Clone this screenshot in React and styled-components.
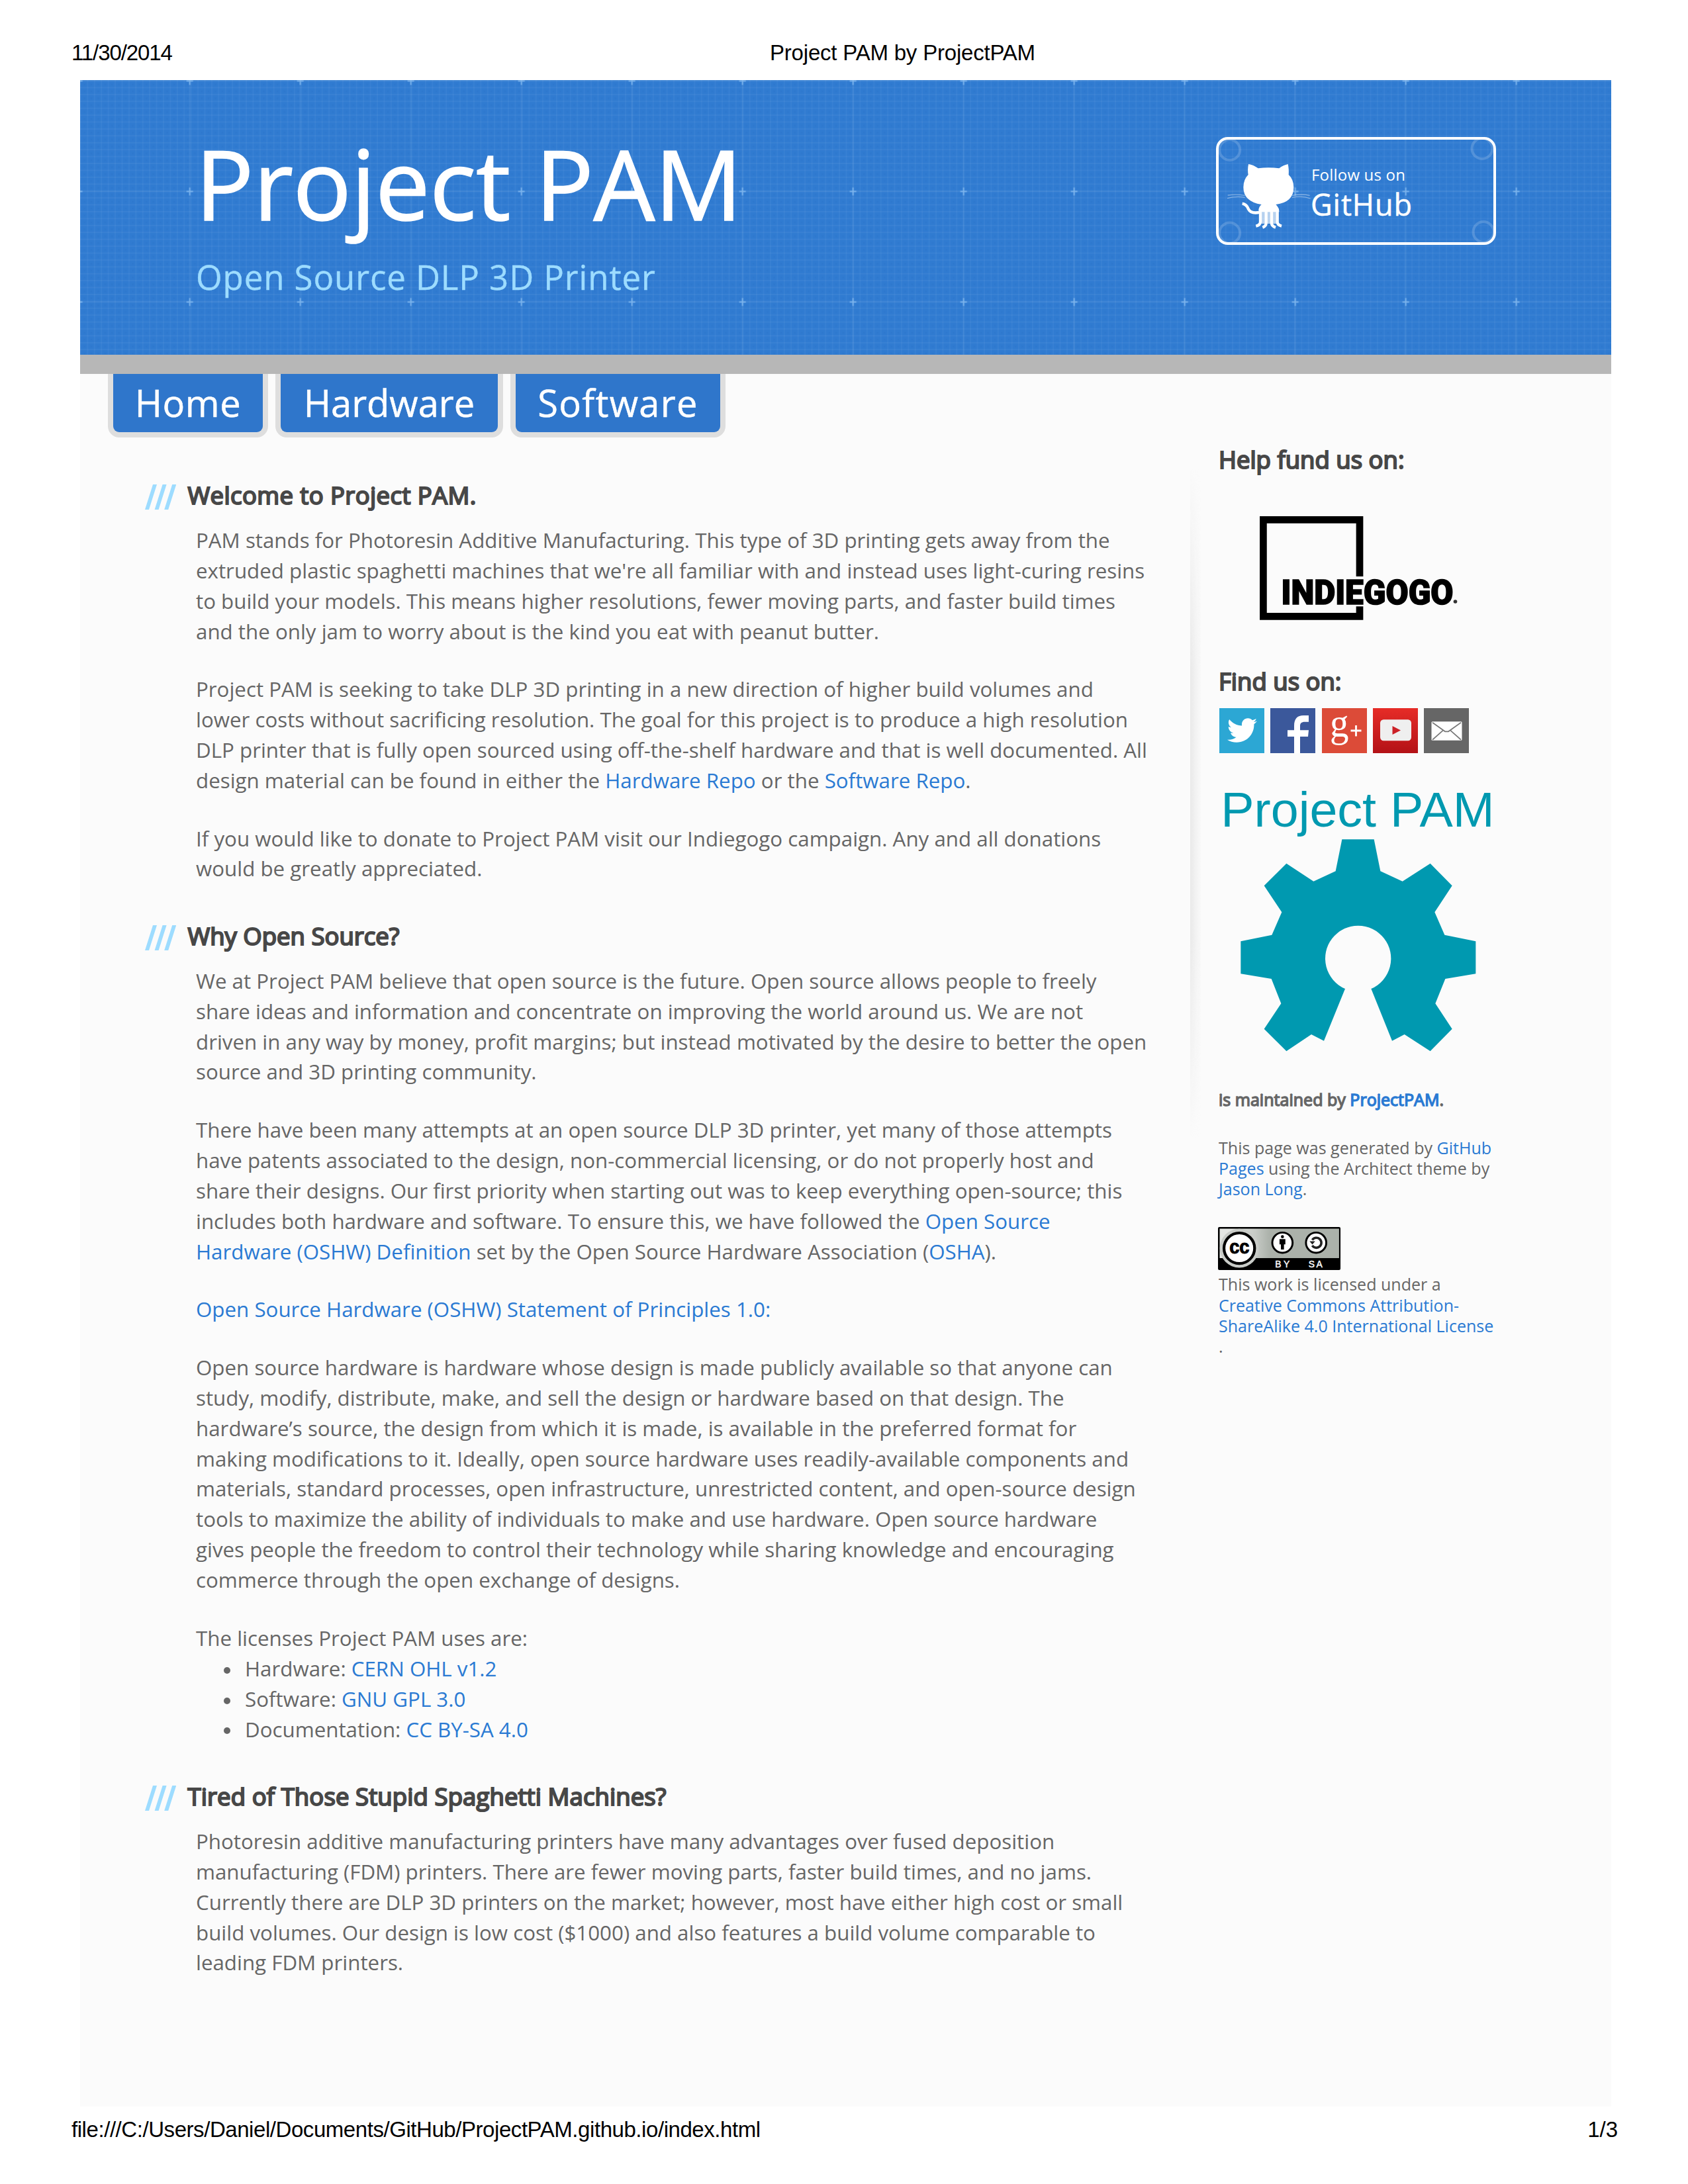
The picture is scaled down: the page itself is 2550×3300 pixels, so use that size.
import React from "react";
import styled, { createGlobalStyle } from "styled-components";
import { FaTwitter } from "react-icons/fa";

const sans = `"Open Sans", "Noto Sans", sans-serif`;
const arial = `"Liberation Sans", Arial, sans-serif`;
const blue = "#2a7ad3";

const GlobalStyle = createGlobalStyle`
  body { margin: 0; background: #fff; }
  * { box-sizing: border-box; }
`;

const Sheet = styled.div`
  width: 2550px;
  height: 3300px;
  overflow: hidden;
  background: #fff;
  display: flex;
  flex-direction: column;
  font-family: ${sans};
  color: #666;
`;

const PrintLine = styled.div`
  display: grid;
  grid-template-columns: 1055px auto 1fr;
  width: 2336px;
  margin-left: 108px;
  padding-top: ${(p) => p.$top}px;
  height: ${(p) => p.$height}px;
  font: 33px/38px ${arial};
  color: #000;
  white-space: nowrap;
`;

const PrintText = styled.span`
  letter-spacing: ${(p) => p.$track || 0}px;
  text-align: ${(p) => p.$align || "left"};
`;

const Page = styled.div`
  width: 2313px;
  height: 3062px;
  margin-left: 121px;
  background: #fbfbfb;
`;

const Header = styled.header`
  position: relative;
  height: 415px;
  padding: 75px 174px 0 174px;
  background: #307bd1;
  display: flex;
  justify-content: space-between;
  align-items: flex-start;
`;

const Texture = styled.svg`
  position: absolute;
  inset: 0;
  width: 100%;
  height: 100%;
`;

const Brand = styled.div`
  position: relative;
`;

const Title = styled.h1`
  margin: 0;
  font-size: 147px;
  line-height: 160px;
  font-weight: 400;
  letter-spacing: -0.5px;
  color: #fff;
  -webkit-text-stroke: 1.6px #fff;
`;

const Tagline = styled.h2`
  margin: 32px 0 0 1px;
  font-size: 51px;
  line-height: 60px;
  font-weight: 400;
  letter-spacing: 0.9px;
  color: #9ddcff;
  -webkit-text-stroke: 0.4px #9ddcff;
`;

const FollowButton = styled.a`
  position: relative;
  width: 423px;
  height: 163px;
  margin-top: 11px;
  border: 4px solid #fff;
  border-radius: 18px;
  display: flex;
  align-items: flex-start;
  color: #fff;
`;

const CornerRings = styled.svg`
  position: absolute;
  left: -4px;
  top: -4px;
`;

const Octocat = styled.svg`
  margin: 33px 0 0 11px;
  flex: none;
`;

const FollowText = styled.div`
  display: flex;
  flex-direction: column;
  margin: 34.5px 0 0 -1px;
`;

const FollowSmall = styled.span`
  font-size: 24px;
  line-height: 36px;
  letter-spacing: 0.2px;
`;

const FollowLarge = styled.span`
  font-size: 45px;
  line-height: 53px;
  letter-spacing: 0.9px;
  margin-left: -1px;
  -webkit-text-stroke: 0.5px #fff;
`;

const Divider = styled.div`
  position: relative;
  z-index: 1;
  height: 29px;
  background: #b7b7b7;
`;

const Nav = styled.nav`
  display: flex;
  gap: 27px;
  padding-left: 50px;
  height: 96px;
`;

const Tab = styled.a`
  width: ${(p) => p.$width}px;
  height: 88px;
  line-height: 87px;
  font-size: 56px;
  letter-spacing: ${(p) => p.$track || 0}px;
  text-align: center;
  color: #fff;
  background: #2f76cb;
  border-radius: 0 0 9px 9px;
  box-shadow: 0 0 0 8px #dedede;
  -webkit-text-stroke: 0.5px #fff;
`;

const Columns = styled.div`
  display: flex;
  align-items: flex-start;
`;

const Main = styled.main`
  width: 1677px;
  padding: 64px 0 0 98px;
`;

const Section = styled.section`
  margin-bottom: 54.5px;
`;

const HeadingRow = styled.div`
  display: flex;
  align-items: flex-start;
  margin-bottom: 22.9px;
`;

const Slashes = styled.svg`
  width: 47px;
  height: 38px;
  margin: 7px 17.5px 0 0;
`;

const Heading = styled.h3`
  margin: 0;
  font-size: 36.5px;
  line-height: 46px;
  font-weight: 400;
  letter-spacing: ${(p) => p.$track || 0}px;
  color: #474747;
  -webkit-text-stroke: 2.1px #474747;
  white-space: nowrap;
`;

const Copy = styled.div`
  width: 1440px;
  margin-left: 77px;
  font-size: 31.3px;
  line-height: 45.9px;
`;

const P = styled.p`
  margin: 0 0 41.7px;
  &:last-child { margin-bottom: 0; }
`;

const Lead = styled.p`
  margin: 0;
`;

const List = styled.ul`
  margin: 0;
  padding-left: 75px;
  list-style: none;
`;

const Item = styled.li`
  display: flex;
  align-items: center;
  white-space: pre;
  &::before {
    content: "";
    width: 10px;
    height: 10px;
    margin: 4px 22px 0 -33px;
    border-radius: 50%;
    background: #666;
  }
`;

const Link = styled.a`
  color: ${blue};
`;

const Side = styled.aside`
  position: relative;
  width: 470px;
  padding: 9.6px 0 0 43px;
  display: flex;
  flex-direction: column;
  align-items: flex-start;
  font-size: 25.05px;
  line-height: 31.3px;
`;

const SideShade = styled.div`
  position: absolute;
  left: 0;
  top: 46px;
  width: 17px;
  height: 1013px;
  background: linear-gradient(to right, #e9e9e9, rgba(251, 251, 251, 0));
  mask-image: linear-gradient(transparent, #000 30%, #000 70%, transparent);
`;

const IndiegogoLogo = styled.svg`
  width: 310px;
  height: 157px;
  margin: 63.6px 0 69.2px 62px;
`;

const Social = styled.div`
  display: flex;
  gap: 9.25px;
  margin: 17.6px 0 55.3px 1px;
`;

const Tile = styled.span`
  width: 68px;
  height: 68px;
  background: ${(p) => p.$bg};
  display: flex;
  align-items: center;
  justify-content: center;
  color: #fff;
`;

const Glyph = styled.svg`
  width: 68px;
  height: 68px;
`;

const GearLogo = styled.svg`
  width: 420px;
  height: 400px;
  margin-left: 0.3px;
`;

const Maintained = styled.p`
  margin: 53px 0 41px;
  -webkit-text-stroke: 1.4px;
  white-space: nowrap;
`;

const Fine = styled.p`
  margin: 0;
  width: 416px;
`;

const Badge = styled.svg`
  width: 185px;
  height: 65px;
  margin: 42px 0 6px -1px;
`;

function BlueprintTexture() {
  return (
    <Texture>
      <defs>
        <pattern id="fine" width="10.42" height="10.42" patternUnits="userSpaceOnUse">
          <rect x="0" y="0" width="1.8" height="10.42" fill="#fff" opacity=".035" />
          <rect x="0" y="0" width="10.42" height="1.8" fill="#fff" opacity=".045" />
          <rect x="5" y="5" width="3" height="3" fill="#1d5fb8" opacity=".1" />
        </pattern>
        <pattern id="cross" x="82.2" y="-82.2" width="167" height="167" patternUnits="userSpaceOnUse">
          <path d="M83.5 0V167M0 83.5H167" stroke="#fff" strokeWidth="2" opacity=".06" />
          <path d="M83.5 77.5V89.5M78.5 83.5H88.5" stroke="#9fd0fb" strokeWidth="2" opacity=".6" />
        </pattern>
      </defs>
      <rect width="100%" height="100%" fill="url(#fine)" />
      <rect width="100%" height="100%" fill="url(#cross)" />
    </Texture>
  );
}

function OctocatMark() {
  return (
    <Octocat width="130" height="104" viewBox="214 186 390 312" fill="none">
      <g stroke="#fff" strokeWidth="4" opacity=".4">
        <path d="M222 339Q260 333 300 340M220 353Q260 342 300 349M514 340Q560 332 594 340M514 349Q560 340 597 354" />
      </g>
      <path
        fill="#fff"
        d="M316 198Q338 201 360 217Q407 211 455 217Q474 202 495 198Q500 222 498 246Q521 268 521 303Q521 371 440 381Q456 396 455 415H378L362 408Q362 392 375 381Q293 368 293 303Q293 268 315 246Q311 222 316 198Z"
      />
      <path fill="#fff" opacity=".65" d="M375 405H448V468H375Z" />
      <path
        stroke="#fff"
        strokeWidth="13"
        d="M370 400V460Q370 474 350 479M396 400V466Q396 479 380 485M421 400V466Q421 479 439 485M447 400V460Q447 474 466 479"
      />
      <path stroke="#fff" strokeWidth="13" d="M288 377Q308 380 316 402Q328 425 368 416" />
    </Octocat>
  );
}

function SectionHeading({ children, track }) {
  return (
    <HeadingRow>
      <Slashes viewBox="0 0 47 38">
        <path fill="#9ddcff" d="M0 38L12 0H18L6 38ZM14.6 38L26.6 0H32.6L20.6 38ZM29.2 38L41.2 0H47.2L35.2 38Z" />
      </Slashes>
      <Heading $track={track}>{children}</Heading>
    </HeadingRow>
  );
}

function Indiegogo() {
  return (
    <IndiegogoLogo viewBox="0 0 310 157">
      <path fill="none" stroke="#000" strokeWidth="10.7" d="M151 91V5.4H5.4V151.3H151V136.3" />
      <text
        x="32.5"
        y="132.5"
        fontFamily="Roboto, sans-serif"
        fontWeight="900"
        fontSize="52"
        textLength="260"
        lengthAdjust="spacingAndGlyphs"
        stroke="#000"
        strokeWidth="1.6"
      >
        INDIEGOGO
      </text>
      <circle cx="295.5" cy="129" r="2.8" fill="#333" />
    </IndiegogoLogo>
  );
}

function SocialIcons() {
  return (
    <Social>
      <Tile $bg="#2ca7d4">
        <FaTwitter size={45} />
      </Tile>
      <Tile $bg="#3b589b">
        <Glyph viewBox="0 0 68 65.5" preserveAspectRatio="none">
          <path fill="#fff" d="M36 65.5V41.5H26V32H36V26C36 15 41 10.5 50 10.5H58V20H52C47 20 45 22 45 26V32H58L57 41.5H45V65.5Z" />
        </Glyph>
      </Tile>
      <Tile $bg="#dc4b38">
        <Glyph viewBox="0 0 68 68">
          <text
            x="12"
            y="43"
            fontFamily='"Liberation Serif", serif'
            fontSize="62"
            textLength="28.5"
            lengthAdjust="spacingAndGlyphs"
            fill="#fff"
          >
            g
          </text>
          <path stroke="#fff" strokeWidth="2.8" d="M43.5 34H59.5M51.5 26V42.5" />
        </Glyph>
      </Tile>
      <Tile $bg="linear-gradient(#e62c27, #b31217)">
        <Glyph viewBox="0 0 68 65.5" preserveAspectRatio="none">
          <rect x="11" y="16.5" width="47" height="31" rx="5" fill="#efefef" />
          <path fill="#cc2127" d="M29.500 26L42 32.300L29.500 38.600Z" />
        </Glyph>
      </Tile>
      <Tile $bg="#666">
        <Glyph viewBox="0 0 68 65.5" preserveAspectRatio="none">
          <rect x="11.5" y="19.5" width="46" height="27.5" rx="1.5" fill="#fff" />
          <path fill="none" stroke="#777" strokeWidth="1.6" d="M13 21L32 34H37L56 21M13 46L29.5 32M56 46L39.5 32" />
        </Glyph>
      </Tile>
    </Social>
  );
}

function PamLogo() {
  return (
    <GearLogo viewBox="184 100 1260 1200" fill="#0099b0">
      <text x="194" y="268" fontFamily={arial} fontSize="223" textLength="1240" lengthAdjust="spacingAndGlyphs">
        Project PAM
      </text>
      <path d="M743 326H888L917 470L1017 516L1143 435L1242 536L1163 656L1208 759L1349 788V935L1211 958L1166 1070L1242 1185L1143 1286L1026 1210L970 1239L875 1003A149 149 0 1 0 757 1003L661 1239L604 1210L491 1286L390 1185L467 1070L423 958L284 935V788L425 759L470 656L390 536L491 435L614 516L714 470Z" />
    </GearLogo>
  );
}

function LicenseBadge() {
  return (
    <Badge viewBox="0 0 88 31" preserveAspectRatio="none">
      <defs>
        <linearGradient id="plate">
          <stop offset="0.1" stopColor="#e4e6e3" />
          <stop offset="0.3" stopColor="#c6cac5" />
          <stop offset="0.42" stopColor="#abb1aa" />
        </linearGradient>
      </defs>
      <rect width="88" height="31" rx="1" fill="#000" />
      <rect x="1.2" y="1.2" width="85.8" height="21.2" fill="url(#plate)" />
      <circle cx="15.3" cy="15.3" r="14" fill="#c9ccc8" />
      <circle cx="15.3" cy="15.3" r="11" fill="#fff" stroke="#000" strokeWidth="2" />
      <text x="8.2" y="19.2" fontFamily={arial} fontWeight="700" fontSize="14" textLength="14.4" lengthAdjust="spacingAndGlyphs" stroke="#000" strokeWidth=".5">
        cc
      </text>
      <circle cx="46.3" cy="11.3" r="7.3" fill="#fff" stroke="#000" strokeWidth="1.4" />
      <circle cx="46.3" cy="7" r="1.1" />
      <path d="M44.2 8.7H48.4V12.5H47.4V16.2H45.2V12.5H44.2Z" />
      <circle cx="70.5" cy="11.3" r="7.3" fill="#fff" stroke="#000" strokeWidth="1.4" />
      <path fill="none" stroke="#222" strokeWidth="1.7" d="M67.7 9.3A3.6 3.6 0 1 1 67.7 13.4" />
      <path fill="#222" d="M65.8 10.2H69.8L67.8 12.6Z" />
      <text x="41" y="29.3" fontFamily={arial} fontSize="6.6" textLength="10.5" fill="#fff" stroke="#fff" strokeWidth=".2">
        BY
      </text>
      <text x="65" y="29.3" fontFamily={arial} fontSize="6.6" textLength="10" fill="#fff" stroke="#fff" strokeWidth=".2">
        SA
      </text>
    </Badge>
  );
}

export default function App() {
  return (
    <Sheet>
      <GlobalStyle />
      <PrintLine $top={61} $height={121}>
        <PrintText $track={-1.1}>11/30/2014</PrintText>
        <PrintText $track={-0.2}>Project PAM by ProjectPAM</PrintText>
      </PrintLine>
      <Page>
        <Header>
          <BlueprintTexture />
          <Brand>
            <Title>Project PAM</Title>
            <Tagline>Open Source DLP 3D Printer</Tagline>
          </Brand>
          <FollowButton>
            <CornerRings width="423" height="163" fill="none" stroke="#fff" strokeOpacity=".16" strokeWidth="4">
              <circle cx="20.7" cy="19.5" r="15.5" />
              <circle cx="402" cy="17.5" r="15.5" />
              <circle cx="20.7" cy="145" r="15.5" />
              <circle cx="404" cy="143.5" r="15.5" />
            </CornerRings>
            <OctocatMark />
            <FollowText>
              <FollowSmall>Follow us on</FollowSmall>
              <FollowLarge>GitHub</FollowLarge>
            </FollowText>
          </FollowButton>
        </Header>
        <Divider />
        <Nav>
          <Tab $width={226} $track={0.6}>Home</Tab>
          <Tab $width={328}>Hardware</Tab>
          <Tab $width={309} $track={1.3}>Software</Tab>
        </Nav>
        <Columns>
          <Main>
            <Section>
              <SectionHeading track={0.4}>Welcome to Project PAM.</SectionHeading>
              <Copy>
                <P>
                  PAM stands for Photoresin Additive Manufacturing. This type of 3D printing gets away from the extruded
                  plastic spaghetti machines that we're all familiar with and instead uses light-curing resins to build
                  your models. This means higher resolutions, fewer moving parts, and faster build times and the only
                  jam to worry about is the kind you eat with peanut butter.
                </P>
                <P>
                  Project PAM is seeking to take DLP 3D printing in a new direction of higher build volumes and lower
                  costs without sacrificing resolution. The goal for this project is to produce a high resolution DLP
                  printer that is fully open sourced using off-the-shelf hardware and that is well documented. All
                  design material can be found in either the <Link>Hardware Repo</Link> or the{" "}
                  <Link>Software Repo</Link>.
                </P>
                <P>
                  If you would like to donate to Project PAM visit our Indiegogo campaign. Any and all donations would
                  be greatly appreciated.
                </P>
              </Copy>
            </Section>
            <Section>
              <SectionHeading>Why Open Source?</SectionHeading>
              <Copy>
                <P>
                  We at Project PAM believe that open source is the future. Open source allows people to freely share
                  ideas and information and concentrate on improving the world around us. We are not driven in any way
                  by money, profit margins; but instead motivated by the desire to better the open source and 3D
                  printing community.
                </P>
                <P>
                  There have been many attempts at an open source DLP 3D printer, yet many of those attempts have
                  patents associated to the design, non-commercial licensing, or do not properly host and share their
                  designs. Our first priority when starting out was to keep everything open-source; this includes both
                  hardware and software. To ensure this, we have followed the{" "}
                  <Link>Open Source Hardware (OSHW) Definition</Link> set by the Open Source Hardware Association (
                  <Link>OSHA</Link>).
                </P>
                <P>
                  <Link>Open Source Hardware (OSHW) Statement of Principles 1.0:</Link>
                </P>
                <P>
                  Open source hardware is hardware whose design is made publicly available so that anyone can study,
                  modify, distribute, make, and sell the design or hardware based on that design. The hardware’s source,
                  the design from which it is made, is available in the preferred format for making modifications to
                  it. Ideally, open source hardware uses readily-available components and materials, standard
                  processes, open infrastructure, unrestricted content, and open-source design tools to maximize the
                  ability of individuals to make and use hardware. Open source hardware gives people the freedom to
                  control their technology while sharing knowledge and encouraging commerce through the open exchange
                  of designs.
                </P>
                <Lead>The licenses Project PAM uses are:</Lead>
                <List>
                  <Item>Hardware: <Link>CERN OHL v1.2</Link></Item>
                  <Item>Software: <Link>GNU GPL 3.0</Link></Item>
                  <Item>Documentation: <Link>CC BY-SA 4.0</Link></Item>
                </List>
              </Copy>
            </Section>
            <Section>
              <SectionHeading track={0.1}>Tired of Those Stupid Spaghetti Machines?</SectionHeading>
              <Copy>
                <P>
                  Photoresin additive manufacturing printers have many advantages over fused deposition manufacturing
                  (FDM) printers. There are fewer moving parts, faster build times, and no jams. Currently there are
                  DLP 3D printers on the market; however, most have either high cost or small build volumes. Our design
                  is low cost ($1000) and also features a build volume comparable to leading FDM printers.
                </P>
              </Copy>
            </Section>
          </Main>
          <Side>
            <SideShade />
            <Heading>Help fund us on:</Heading>
            <Indiegogo />
            <Heading>Find us on:</Heading>
            <SocialIcons />
            <PamLogo />
            <Maintained>
              is maintained by <Link>ProjectPAM</Link>.
            </Maintained>
            <Fine>
              This page was generated by <Link>GitHub Pages</Link> using the Architect theme by <Link>Jason Long</Link>.
            </Fine>
            <LicenseBadge />
            <Fine>
              This work is licensed under a <Link>Creative Commons Attribution-ShareAlike 4.0 International License</Link>
              <br />.
            </Fine>
          </Side>
        </Columns>
      </Page>
      <PrintLine $top={16} $height={100}>
        <PrintText $track={-0.44}>file:///C:/Users/Daniel/Documents/GitHub/ProjectPAM.github.io/index.html</PrintText>
        <span />
        <PrintText $align="right">1/3</PrintText>
      </PrintLine>
    </Sheet>
  );
}
